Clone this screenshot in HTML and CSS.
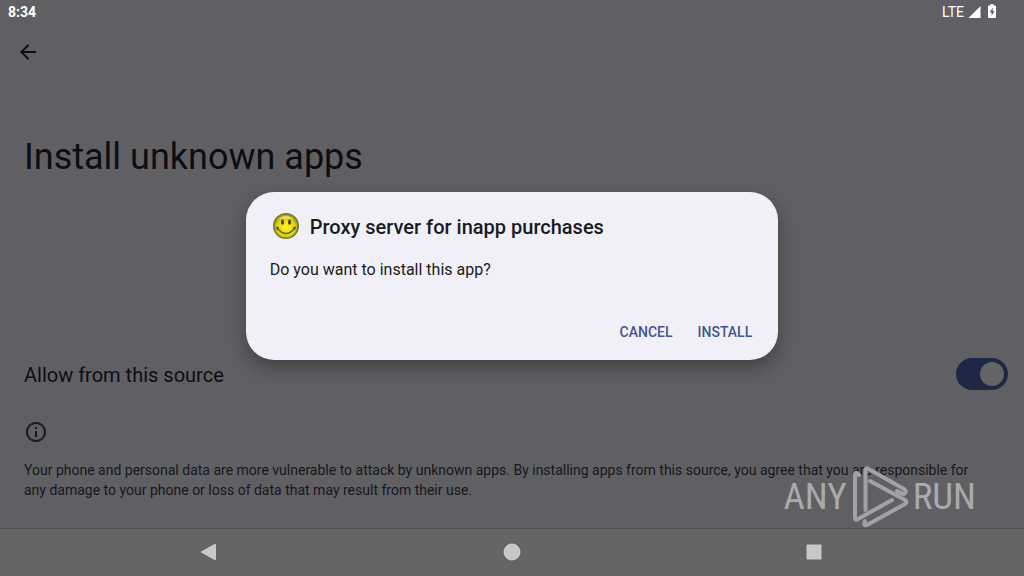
FILE: index.html
```html
<!DOCTYPE html>
<html lang="en">
<head>
<meta charset="utf-8">
<meta name="viewport" content="width=device-width, initial-scale=1">
<title>Install unknown apps</title>
<link rel="stylesheet" href="styles.css">
</head>
<body>
<div class="screen">
  <header class="status">
    <time class="clock">8:34</time>
    <div class="signals">
      <span>LTE</span>
      <svg class="signal" viewBox="0 0 12 12" aria-hidden="true"><path d="M12 0v12H0z"/></svg>
      <svg class="battery" viewBox="0 0 8 14" aria-hidden="true"><path d="M2.500 0h3v1.500H7a1 1 0 0 1 1 1V13a1 1 0 0 1-1 1H1a1 1 0 0 1-1-1V2.500a1 1 0 0 1 1-1h1.500z"/><path class="bolt" d="M4.700 3.500 1.700 8.500h1.900v3.500l2.900-5H4.700z"/></svg>
    </div>
  </header>

  <main class="settings">
    <button class="back" type="button" aria-label="Back">
      <svg viewBox="0 0 24 24" aria-hidden="true"><path d="M20 11H7.830l5.590-5.590L12 4l-8 8 8 8 1.410-1.410L7.830 13H20z"/></svg>
    </button>
    <h1 class="title">Install unknown apps</h1>
    <div class="source">
      <label for="allow">Allow from this source</label>
      <input class="switch" id="allow" type="checkbox" role="switch" checked>
    </div>
    <div class="notice">
      <svg class="info" viewBox="0 0 24 24" aria-hidden="true"><path d="M11 7h2v2h-2zm0 4h2v6h-2zm1-9C6.480 2 2 6.480 2 12s4.480 10 10 10 10-4.480 10-10S17.520 2 12 2zm0 18c-4.410 0-8-3.590-8-8s3.590-8 8-8 8 3.590 8 8-3.590 8-8 8z"/></svg>
      <p>Your phone and personal data are more vulnerable to attack by unknown apps. By installing apps from this source, you agree that you are responsible for any damage to your phone or loss of data that may result from their use.</p>
    </div>
  </main>

  <nav class="navbar" aria-label="System">
    <button type="button" aria-label="Back"><svg viewBox="0 0 18 18"><path d="M15 1.500v15a1 1 0 0 1-1.500.5L.5 9.800a1 1 0 0 1 0-1.600L13.500 1a1 1 0 0 1 1.500.5z"/></svg></button>
    <button type="button" aria-label="Home"><svg viewBox="0 0 18 18"><circle cx="9" cy="9" r="8.500"/></svg></button>
    <button type="button" aria-label="Overview"><svg viewBox="0 0 18 18"><rect x="1.500" y="1.500" width="15" height="15" rx="1"/></svg></button>
  </nav>

  <div class="overlay">
    <section class="dialog" role="dialog" aria-labelledby="app-name">
      <div class="app">
        <svg class="smiley" viewBox="0 0 32 32" aria-hidden="true">
          <defs><radialGradient id="face" cx=".5" cy=".55" r=".5"><stop offset="0" stop-color="#fff21a"/><stop offset=".72" stop-color="#e2d515"/><stop offset="1" stop-color="#9c9324"/></radialGradient></defs>
          <circle cx="16" cy="15" r="12.300" fill="url(#face)" stroke="#7c7735" stroke-width="1.500"/>
          <path d="M8 8.500Q16 1 24 8.500Q16 6 8 8.500" fill="#f6f1a0" opacity=".6"/>
          <ellipse cx="12.500" cy="11.200" rx="1.500" ry="2.900" fill="#4b4611"/>
          <ellipse cx="19.500" cy="11.200" rx="1.500" ry="2.900" fill="#4b4611"/>
          <path d="M7.500 17.500q8.500 10 17 0" fill="none" stroke="#655e14" stroke-width="1.300"/>
          <circle cx="7.500" cy="17" r="1.500" fill="#655e14"/><circle cx="24.500" cy="17" r="1.500" fill="#655e14"/>
        </svg>
        <h2 id="app-name">Proxy server for inapp purchases</h2>
      </div>
      <p class="question">Do you want to install this app?</p>
      <div class="actions">
        <button type="button">CANCEL</button>
        <button type="button">INSTALL</button>
      </div>
    </section>
  </div>

  <div class="watermark" aria-label="ANY RUN">
    <span>ANY</span>
    <svg viewBox="0 0 58 64" aria-hidden="true"><path d="M14.500 45V6q0-4 3-2L53 24q3 2 1 4-1 2-4 0l-4-2M8 10 6 8q-2-1-2 2v42q0 4 3 2l34-19M14 56q-2 5 2 4l38-21q3-2 0-4L19 16"/></svg>
    <span>RUN</span>
  </div>
</div>
</body>
</html>
```
FILE: styles.css
```css
* { box-sizing: border-box; }

body {
  margin: 0;
  font-family: Roboto, "Liberation Sans", sans-serif;
  color: #0d0d12;
  background: #606064;
}

h1, h2, p { margin: 0; font-weight: 400; }

button {
  border: 0;
  padding: 0;
  background: none;
  color: inherit;
  font: inherit;
}

svg { display: block; }

.screen {
  position: relative;
  display: flex;
  flex-direction: column;
  min-height: 100vh;
}

.status {
  display: flex;
  justify-content: space-between;
  align-items: center;
  height: 24px;
  padding: 0 28px 0 8px;
  color: #fff;
  font-size: 14px;
}

.clock { font-weight: 700; }
.signals { display: flex; align-items: center; gap: 4px; }
.signal { width: 13px; height: 12px; fill: #fff; }
.battery { width: 8px; height: 14px; margin: 0 0 3px 3px; fill: #fff; }
.bolt { fill: #606064; }

.settings {
  flex: 1;
  display: flex;
  flex-direction: column;
  padding: 16px 16px 28px 24px;
}

.back { width: 24px; height: 24px; margin-left: -8px; }
.back svg { width: 24px; fill: #0d0d12; }

.title {
  margin-top: 69px;
  font-size: 36px;
  line-height: 48px;
}

.source {
  display: flex;
  justify-content: space-between;
  align-items: center;
  margin-top: 177px;
  font-size: 20px;
}

.source label { padding-top: 2px; }

.switch {
  appearance: none;
  display: flex;
  justify-content: flex-end;
  width: 52px;
  height: 32px;
  margin: 0;
  padding: 4px;
  border-radius: 16px;
  background: #1e2745;
}

.switch::before {
  content: "";
  width: 24px;
  height: 24px;
  border-radius: 50%;
  background: #646464;
}

.notice { margin-top: 30px; padding-right: 24px; color: #17171c; font-size: 14px; line-height: 20px; }
.info { width: 24px; margin-bottom: 16px; fill: #17171c; }

.navbar {
  display: flex;
  justify-content: center;
  gap: 24%;
  height: 48px;
  padding-bottom: 2px;
  border-top: 1px solid #525252;
  background: #646464;
}

.navbar button { display: grid; place-items: center; width: 56px; }
.navbar svg { width: 18px; fill: #c8c8c8; }

.overlay {
  position: absolute;
  inset: 24px 0 48px;
  display: grid;
  place-items: center;
}

.dialog {
  width: 52%;
  padding: 18px 24px 12px;
  border-radius: 28px;
  background: #f1f0f8;
  color: #1a1b21;
  box-shadow: 0 8px 20px rgb(0 0 0 / 32%);
}

.app { display: flex; align-items: center; gap: 8px; }
.smiley { width: 32px; height: 32px; }
.app h2 { font-size: 20px; font-weight: 500; line-height: 34px; }
.question { margin-top: 14px; font-size: 16px; line-height: 24px; }

.actions {
  display: flex;
  justify-content: flex-end;
  gap: 25px;
  margin-top: 34px;
  padding-right: 2px;
  color: #455689;
  font-size: 14px;
  font-weight: 500;
  line-height: 32px;
}

.watermark {
  position: absolute;
  right: 48px;
  bottom: 47px;
  display: flex;
  align-items: center;
  gap: 4px;
  color: #aaaaac;
  font-family: "Roboto Condensed", "Liberation Sans Narrow", Roboto, sans-serif;
  font-size: 37px;
  font-weight: 400;
  line-height: 40px;
  pointer-events: none;
}

.watermark svg {
  width: 58px;
  height: 64px;
  fill: none;
  stroke: #a2a2a4;
  stroke-width: 4;
  stroke-linejoin: round;
  stroke-linecap: round;
}
```
